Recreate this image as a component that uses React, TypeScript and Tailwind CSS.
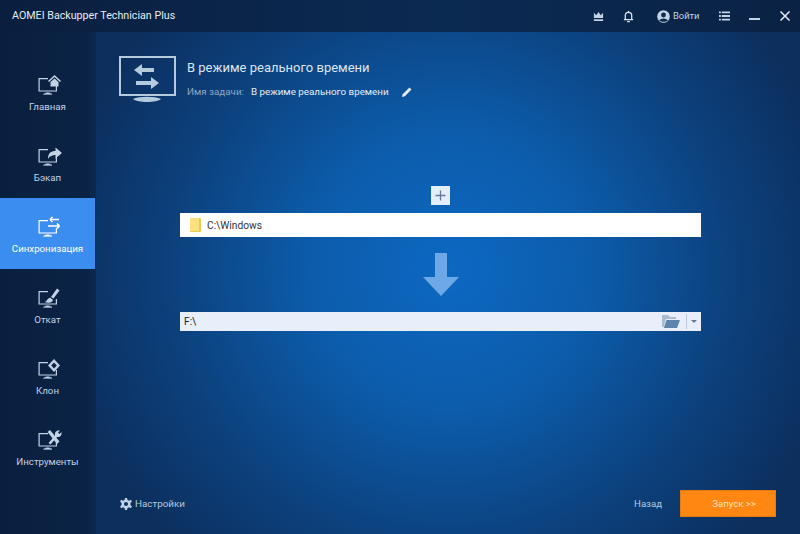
import { ReactNode } from 'react';

function SideIcon({ children }: { children: ReactNode }) {
    return (
        <svg width="24" height="22" viewBox="0 0 24 22" fill="none" className="ml-[4px]">
            {/* monitor */}
            <path d="M10 4.6H1.1V17H18.4V12" stroke="currentColor" strokeWidth="1.2" />
            <path d="M5.5 20.3Q9.7 17 14 20.3Z" fill="currentColor" stroke="currentColor" strokeWidth="0.6" />
            {children}
        </svg>
    );
}

const navItems: { label: string; active?: boolean; icon: ReactNode }[] = [
    {
        label: 'Главная',
        icon: (
            <>
                <path d="M10.5 7.5L16.5 2L22.5 7.5" stroke="currentColor" strokeWidth="1.6" />
                <path d="M12.5 8V12.5H20.5V8L16.5 4.5Z" fill="currentColor" />
            </>
        ),
    },
    {
        label: 'Бэкап',
        icon: <path d="M10 14C10 8 13 6 17.5 6V2.5L24 8L17.5 13.5V10C14.5 10 11.5 11 10 14Z" fill="currentColor" />,
    },
    {
        label: 'Синхронизация',
        active: true,
        icon: (
            <>
                <path d="M21 3.5H12M12 3.5L14.5 1M12 3.5L14.5 6" stroke="#fff" strokeWidth="1.6" />
                <path d="M10 10H21.5M21.5 10L19 7.5M21.5 10L19 12.5" stroke="#fff" strokeWidth="1.6" />
            </>
        ),
    },
    {
        label: 'Откат',
        icon: (
            <>
                <path d="M13 10L19 1.5L21.5 3.5L15.5 11.5Z" fill="currentColor" />
                <path d="M6.5 15C9 15 9.5 10.5 12.5 10.8L15 13C14.5 15.5 11 16.5 6.5 15Z" fill="currentColor" />
            </>
        ),
    },
    {
        label: 'Клон',
        icon: <path d="M16 1L22 7.5L16 14L10 7.5ZM16 4.5L13.2 7.5L16 10.5L18.8 7.5Z" fill="currentColor" fillRule="evenodd" />,
    },
    {
        label: 'Инструменты',
        icon: (
            <>
                <path d="M9.5 3L12 1L21.5 12.5L19 15Z" fill="currentColor" />
                <path d="M10.5 14L17 6.5C16.5 3 18.5 1 22 1.5L20 3.5L21.5 5L23.5 3C24 6.5 22 8.5 19 8L12.5 15.5Z" fill="currentColor" />
            </>
        ),
    },
];

function NavItem({ label, active, icon }: { label: string; active?: boolean; icon: ReactNode }) {
    return (
        <div className={active ? 'w-[95px] h-[71px] flex flex-col items-center pt-[18px] bg-[#3c8df0] text-white' : 'w-[95px] h-[71px] flex flex-col items-center pt-[18px] text-[#c3d3e6]'}>
            <SideIcon>{icon}</SideIcon>
            <span className="text-[9.7px] leading-[16px] mt-[3px]">{label}</span>
        </div>
    );
}

export default function App() {
    return (
        <div
            className="w-[800px] h-[534px] flex flex-col overflow-hidden bg-[#0b2547] text-white"
            style={{ fontFamily: 'Roboto, sans-serif' }}
        >
            {/* title bar */}
            <div className="h-[32px] shrink-0 flex items-center bg-[linear-gradient(90deg,#0a1f3f_0%,#0b2a52_55%,#0a2244_100%)] pl-[12px]">
                <span className="text-[10.7px] text-[#e6edf5] flex-1">AOMEI Backupper Technician Plus</span>
                <svg width="11" height="11" viewBox="0 0 12 12" fill="#c3d3e6" className="mr-[19px]">
                    <path d="M1 2L3.5 4.5L6 1L8.5 4.5L11 2V7.5H1ZM1 9H11V11H1Z" />
                </svg>
                <svg width="11" height="13" viewBox="0 0 12 13" fill="none" stroke="#dbe5f0" strokeWidth="1.4" className="mr-[23px]">
                    <path d="M1 10H11M2.5 10V5.5C2.5 3.5 4 2 6 2C8 2 9.5 3.5 9.5 5.5V10" />
                    <path d="M4.5 12H7.5M6 0.5V2" />
                </svg>
                <svg width="13" height="13" viewBox="0 0 13 13" className="mr-[3px]">
                    <circle cx="6.5" cy="6.5" r="6.3" fill="#c3d3e6" />
                    <circle cx="6.5" cy="5" r="2.4" fill="#0a2a50" />
                    <path d="M2.2 10.5C3.5 7.8 9.5 7.8 10.8 10.5C9 12.2 4 12.2 2.2 10.5Z" fill="#0a2a50" />
                </svg>
                <span className="text-[9.4px] text-[#c3d3e6] w-[25px]">Войти</span>
                <svg width="11" height="10" viewBox="0 0 12 10" fill="#c3d3e6" className="ml-[21px] mr-[19px]">
                    <path d="M0 0H2V2H0ZM3 0H12V2H3ZM0 4H2V6H0ZM3 4H12V6H3ZM0 8H2V10H0ZM3 8H12V10H3Z" />
                </svg>
                <div className="w-[11px] h-[2px] bg-[#c3d3e6] mr-[20px] mt-[6px]" />
                <svg width="10" height="10" viewBox="0 0 10 10" stroke="#e6edf5" strokeWidth="1.5" className="mr-[10px]">
                    <path d="M0.5 0.5L9.5 9.5M9.5 0.5L0.5 9.5" />
                </svg>
            </div>

            <div className="flex-1 flex min-h-0">
                {/* sidebar */}
                <div className="w-[96px] shrink-0 pt-[24px] bg-[linear-gradient(90deg,#0a1f3f_0%,#0a2345_90%,#0b2950_100%)]">
                    {navItems.map((item) => (
                        <NavItem key={item.label} label={item.label} active={item.active} icon={item.icon} />
                    ))}
                </div>

                {/* main panel */}
                <div className="flex-1 flex flex-col bg-[radial-gradient(ellipse_390px_390px_at_355px_238px,#0d68c2_0%,#0c5cab_36%,#0c427f_70%,#0c2f5e_100%)]">
                    {/* header */}
                    <div className="h-[82px] shrink-0 flex pl-[23px] pt-[24px]">
                        <svg width="57" height="47" viewBox="0 0 57 47" fill="none">
                            <rect x="1" y="1" width="55" height="38" stroke="#b6cade" strokeWidth="2" />
                            <path d="M15 14L23 8V12H35V16H23V20Z" fill="#b6cade" />
                            <path d="M40 27L32 21V25H17V29H32V33Z" fill="#b6cade" />
                            <path d="M14 43C20 40 36 40 42 43C38 47 18 47 14 43Z" fill="#b6cade" />
                        </svg>
                        <div className="ml-[11px]">
                            <div className="text-[13px] leading-[18px] text-[#dbe6f2] mt-[3px]">В режиме реального времени</div>
                            <div className="flex items-center mt-[7px] text-[9.8px] leading-[16px]">
                                <span className="text-[#8ea8c4]">Имя задачи:</span>
                                <span className="ml-[7px] text-[#e6edf5]">В режиме реального времени</span>
                                <svg width="10" height="10" viewBox="0 0 10 10" fill="#e6edf5" className="ml-[13px]">
                                    <path d="M0 10L0.7 7.2L7.5 0.5L9.5 2.5L2.8 9.3Z" />
                                </svg>
                            </div>
                        </div>
                    </div>

                    {/* source and destination */}
                    <div className="flex-1 flex flex-col items-center pl-[84px] pr-[99px] pt-[72px]">
                        <div className="w-[19px] h-[19px] bg-[#e4eef8] flex items-center justify-center">
                            <svg width="11" height="11" viewBox="0 0 11 11" stroke="#66789a" strokeWidth="1.3">
                                <path d="M5.5 0.5V10.5M0.5 5.5H10.5" />
                            </svg>
                        </div>
                        <div className="w-full h-[24px] mt-[8px] bg-white flex items-center pl-[10px]">
                            <div className="w-[11px] h-[14px] bg-[#fbe27e] border-r-2 border-b border-[#edc94e] rounded-[1px]" />
                            <span className="ml-[6px] pt-[1px] text-[10.2px] text-[#333]">C:\Windows</span>
                        </div>
                        <svg width="36" height="43" viewBox="0 0 36 43" fill="#6fa8e6" className="mt-[16px]">
                            <path d="M12 0H24V24H36L18 43L0 24H12Z" />
                        </svg>
                        <div className="w-full h-[19px] mt-[16px] bg-[#e8effa] flex items-center pl-[4px]">
                            <span className="flex-1 pt-[1px] text-[10.2px] text-[#222]">F:\</span>
                            <svg width="18" height="13" viewBox="0 0 18 13">
                                <path d="M0 0H6L8 2H14V4H4L1.5 12H0Z" fill="#a9bbd0" />
                                <path d="M4.5 5H18L15 13H1.8Z" fill="#5f84ab" />
                            </svg>
                            <div className="w-px h-[15px] bg-[#bcc8d6] ml-[6px]" />
                            <div className="w-0 h-0 mx-[4px] border-x-[3px] border-x-transparent border-t-[3px] border-t-[#667a92]" />
                        </div>
                    </div>

                    {/* footer */}
                    <div className="h-[44px] shrink-0 flex items-start pl-[24px] pr-[24px]">
                        <svg width="12" height="12" viewBox="0 0 24 24" fill="#c3d3e6" className="mt-[8px]">
                            <path
                                fillRule="evenodd"
                                d="M10 0H14L15 4L18 5.5L21.5 3.5L24 7L21 9.5V14.5L24 17L21.5 20.5L18 18.5L15 20L14 24H10L9 20L6 18.5L2.5 20.5L0 17L3 14.5V9.5L0 7L2.5 3.5L6 5.5L9 4ZM12 8A4 4 0 1 0 12 16A4 4 0 1 0 12 8Z"
                            />
                        </svg>
                        <span className="ml-[3px] mt-[6px] text-[9.8px] leading-[16px] text-[#b6cade] flex-1">Настройки</span>
                        <span className="mt-[6px] text-[9.6px] leading-[16px] text-[#b6cade] mr-[18px]">Назад</span>
                        <div className="w-[96px] h-[27px] bg-[#ff8712] border border-[#e57a10] flex items-center justify-center pl-[12px] pt-[2px] text-[9.6px] text-[#ffe0b8]">
                            Запуск &gt;&gt;
                        </div>
                    </div>
                </div>
            </div>
        </div>
    );
}
